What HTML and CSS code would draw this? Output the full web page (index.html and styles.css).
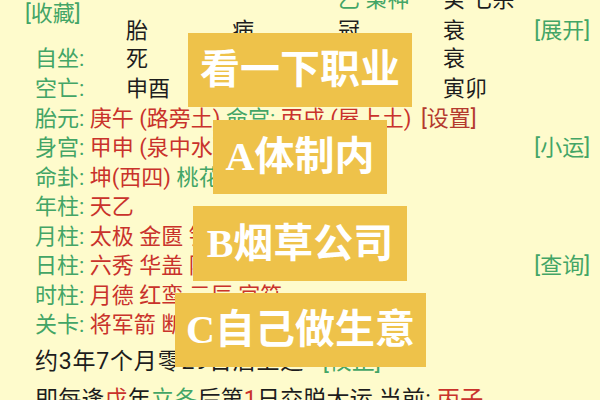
FILE: index.html
```html
<!DOCTYPE html>
<html lang="zh-CN">
<head>
<meta charset="utf-8">
<title>命盘</title>
<link rel="stylesheet" href="styles.css">
</head>
<body>
<div class="page">
  <div class="pillars">
    <span class="link fav">[收藏]</span>
    <span class="c4 g">乙 枭神</span>
    <span class="c5">癸 七杀</span>

    <span class="c2 r2">胎</span>
    <span class="c3 r2">病</span>
    <span class="c4 r2">冠</span>
    <span class="c5 r2">衰</span>
    <span class="c6 r2 link">[展开]</span>

    <span class="c1 g">自坐:</span>
    <span class="c2">死</span>
    <span class="c3">病</span>
    <span class="c4">冠</span>
    <span class="c5">衰</span>

    <span class="c1 g">空亡:</span>
    <span class="c2">申酉</span>
    <span class="c3">午未</span>
    <span class="c4">子丑</span>
    <span class="c5">寅卯</span>
  </div>

  <div class="list">
    <div class="row"><span><span class="g">胎元:</span> <span class="r">庚午 (路旁土)</span> <span class="g">命宫:</span> <span class="r">丙戌 (屋上土)</span> <span class="set">[设置]</span></span></div>
    <div class="row"><span><span class="g">身宫:</span> <span class="r">甲申 (泉中水)</span></span><span class="link">[小运]</span></div>
    <div class="row"><span><span class="g">命卦:</span> <span class="r">坤(西四)</span> <span class="g">桃花:</span> <span class="r">酉</span></span></div>
    <div class="row"><span><span class="g">年柱:</span> <span class="r">天乙</span></span></div>
    <div class="row"><span><span class="g">月柱:</span> <span class="r">太极 金匮 铁扫</span></span></div>
    <div class="row"><span><span class="g">日柱:</span> <span class="r">六秀 华盖 阳差</span></span><span class="link">[查询]</span></div>
    <div class="row"><span><span class="g">时柱:</span> <span class="r">月德 红鸾 元辰 官符</span></span></div>
    <div class="row"><span><span class="g">关卡:</span> <span class="r">将军箭 断桥关</span></span></div>
    <div class="row luck"><span>约3年7个月零29日后上运 <span class="link fix">[校正]</span></span></div>
    <div class="row last"><span>即每逢<span class="r">戊</span>年<span class="g">立冬</span>后第<span class="r">1</span>日交脱大运 当前: <span class="r">丙子</span></span></div>
  </div>
</div>

<div class="card card1">看一下职业</div>
<div class="card card2">A体制内</div>
<div class="card card3">B烟草公司</div>
<div class="card card4">C自己做生意</div>
</body>
</html>
```

FILE: styles.css
```css
html, body {
  margin: 0;
  padding: 0;
}
body {
  width: 600px;
  height: 400px;
  overflow: hidden;
  position: relative;
  background: #fefbcc;
  font-family: Roboto, "Noto Sans CJK SC", sans-serif;
  font-size: 22px;
  color: #1d1d1d;
}
.page {
  padding: 0 10px 0 35px;
}
.g { color: #43a566; }
.r { color: #c9322b; }
.link { color: #43a566; }
.set { color: #b4392e; margin-left: 4px; }
.fix { margin-left: 12px; letter-spacing: 0; }

.pillars {
  display: grid;
  grid-template-columns: 91px 106px 106px 105px 1fr auto;
  grid-template-rows: 33px 29px 28px 31px;
  margin-top: -17px;
  align-items: center;
  line-height: 1;
  white-space: nowrap;
}
.fav {
  grid-column: 1;
  grid-row: 1 / 3;
  margin-left: -10px;
}
.c1 { grid-column: 1; }
.c2 { grid-column: 2; }
.c3 { grid-column: 3; }
.c4 { grid-column: 4; }
.c5 { grid-column: 5; }
.c6 { grid-column: 6; justify-self: end; }
.r2 { grid-row: 2; }

.list .row {
  display: flex;
  justify-content: space-between;
  align-items: center;
  height: 29.5px;
  line-height: 1;
  white-space: nowrap;
}
.list .luck {
  margin-top: 7px;
  font-size: 23px;
  letter-spacing: 0.8px;
}
.list .last {
  margin-top: 5px;
  height: 36px;
  font-size: 23px;
  letter-spacing: 0.2px;
}

.card {
  position: absolute;
  display: flex;
  align-items: center;
  justify-content: center;
  background: #eec24a;
  color: #ffffff;
  font-family: "Liberation Serif", "Noto Sans CJK SC", serif;
  font-weight: 700;
  font-size: 40px;
  line-height: 1;
  white-space: nowrap;
}
.card1 { left: 188px; top: 33px; width: 224px; height: 74px; }
.card2 { left: 213px; top: 120px; width: 174px; height: 74px; }
.card3 { left: 193px; top: 206px; width: 214px; height: 75px; }
.card4 { left: 175px; top: 293px; width: 251px; height: 74px; }
```
